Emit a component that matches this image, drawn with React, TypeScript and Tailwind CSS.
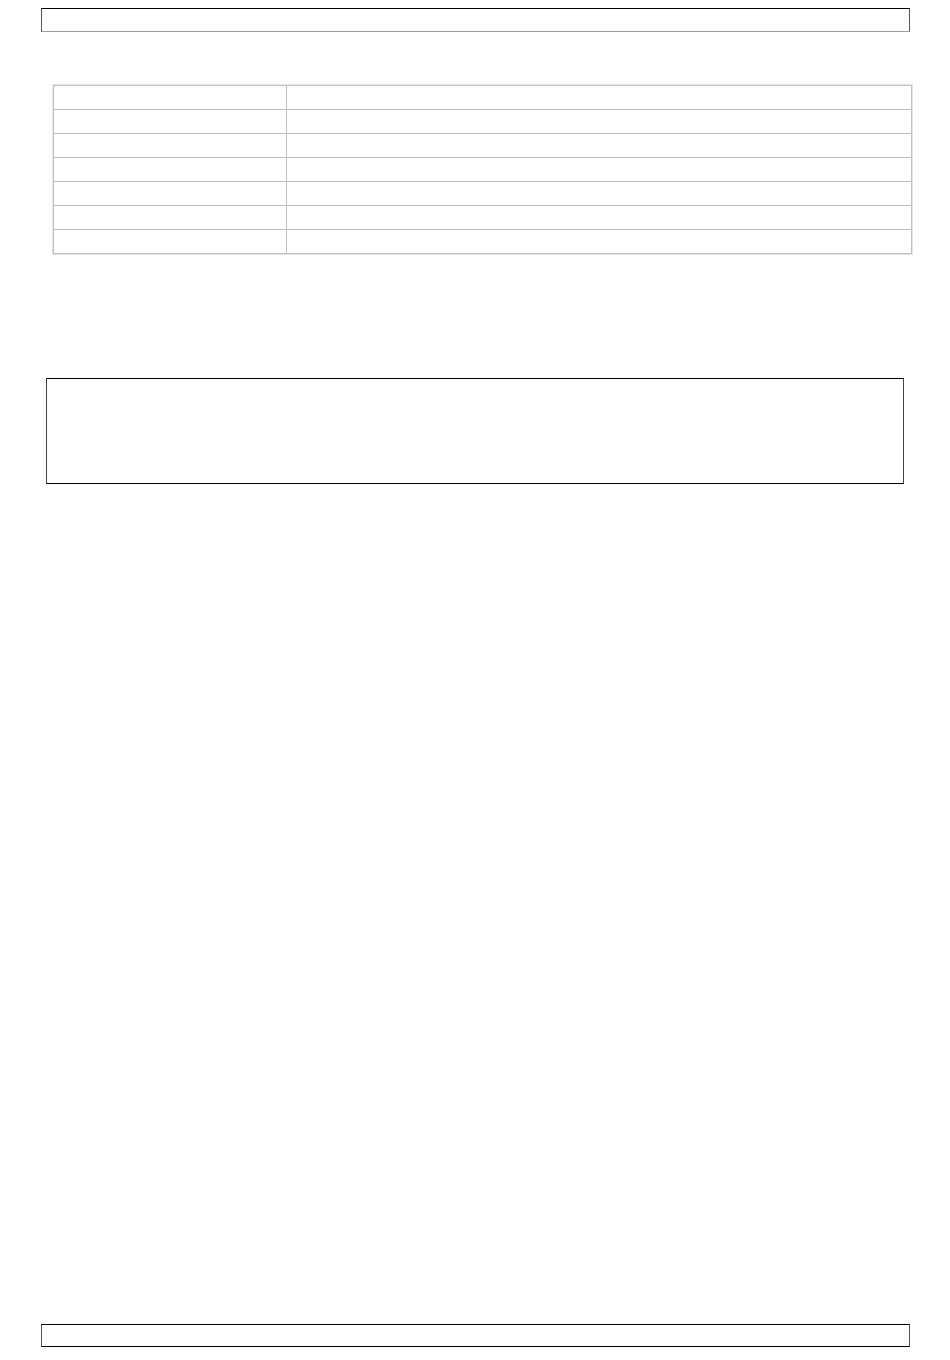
import React from "react";

export default function App() {
  const rows = Array.from({ length: 7 });
  return (
    <div className="w-[950px] h-[1360px] bg-white flex flex-col" style={{ fontFamily: '"Liberation Sans", Arial, sans-serif' }}>
      <div className="mt-[8px] ml-[41px] w-[869px] h-[24px] border border-t-black border-l-[#555] border-r-[#555] border-b-[#a0a0a0]" />
      <div className="mt-[52px] ml-[52px] w-[861px] border border-[#e6e6e6]">
        <div className="border-t border-l border-[#c0c0c0]">
          {rows.map((_, i) => (
            <div key={i} className="flex h-[24px] border-b border-[#c0c0c0]">
              <div className="w-[233px] border-r border-[#c0c0c0]" />
              <div className="flex-1 border-r border-[#c0c0c0]" />
            </div>
          ))}
        </div>
      </div>
      <div className="mt-[123px] ml-[46px] w-[858px] h-[106px] border border-black border-l-[#444] border-r-[#444]" />
      <div className="flex-1" />
      <div className="mb-[13px] ml-[41px] w-[869px] h-[23px] border border-black border-l-[#555] border-r-[#555]" />
    </div>
  );
}
